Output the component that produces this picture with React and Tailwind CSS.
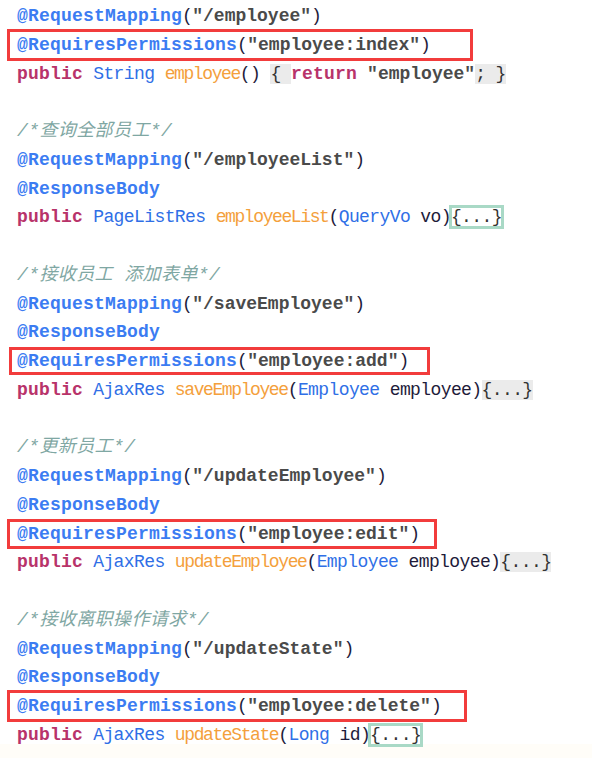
import React from "react";

const A = ({ children }) => (
  <span className="font-bold text-[#3b7cf2] tracking-[0.2px]">{children}</span>
);
const K = ({ children }) => (
  <span className="font-bold text-[#b8336a] tracking-[0.2px]">{children}</span>
);
const T = ({ children }) => (
  <span className="text-[#2f6fe6] tracking-[-0.6px]">{children}</span>
);
const M = ({ children }) => (
  <span className="text-[#f4a03c] tracking-[-1.4px]">{children}</span>
);
const S = ({ children }) => (
  <span className="font-bold text-[#4a4a4a] tracking-[0px]">{children}</span>
);
const P = ({ children }) => (
  <span className="text-[#1e1b3a] tracking-[-0.6px]">{children}</span>
);
const G = ({ children }) => (
  <span className="bg-[#ebebeb] text-[#333] tracking-[-0.6px]">{children}</span>
);
const B = ({ children }) => (
  <span className="tracking-[-0.6px] text-[#333] outline outline-[3px] outline-[#a9d9c6] -outline-offset-1">
    {children}
  </span>
);
const C = ({ children }) => (
  <span className="italic text-[#7fa7a3] tracking-[0.4px]">{children}</span>
);

const Line = ({ children, box }) => (
  <div className="relative h-[28.76px] leading-[28.76px] whitespace-pre">
    {box && (
      <span
        className={
          "absolute border-[3px] border-[#f23c3c] pointer-events-none " + box
        }
      />
    )}
    {children}
  </div>
);

export default function App() {
  return (
    <div
      className="w-[592px] h-[758px] bg-white overflow-hidden flex flex-col"
      style={{ fontFamily: '"Liberation Mono", "Noto Sans CJK SC", monospace' }}
    >
      <div className="pl-[17px] pt-[2px] text-[18px]">
        <Line>
          <A>@RequestMapping</A>
          <P>(</P>
          <S>"/employee"</S>
          <P>)</P>
        </Line>
        <Line box="-left-[10px] -top-[2px] w-[466px] h-[32px]">
          <A>@RequiresPermissions</A>
          <P>(</P>
          <S>"employee:index"</S>
          <P>)</P>
        </Line>
        <Line>
          <K>public</K>
          <P> </P>
          <T>String</T>
          <P> </P>
          <M>employee</M>
          <P>() </P>
          <G>{"{ "}</G>
          <K>return</K>
          <P> </P>
          <S>"employee"</S>
          <G>; {"}"}</G>
        </Line>
        <Line> </Line>
        <Line>
          <C>/*查询全部员工*/</C>
        </Line>
        <Line>
          <A>@RequestMapping</A>
          <P>(</P>
          <S>"/employeeList"</S>
          <P>)</P>
        </Line>
        <Line>
          <A>@ResponseBody</A>
        </Line>
        <Line>
          <K>public</K>
          <P> </P>
          <T>PageListRes</T>
          <P> </P>
          <M>employeeList</M>
          <P>(</P>
          <T>QueryVo</T>
          <P> vo)</P>
          <B>{"{...}"}</B>
        </Line>
        <Line> </Line>
        <Line>
          <C>/*接收员工 添加表单*/</C>
        </Line>
        <Line>
          <A>@RequestMapping</A>
          <P>(</P>
          <S>"/saveEmployee"</S>
          <P>)</P>
        </Line>
        <Line>
          <A>@ResponseBody</A>
        </Line>
        <Line box="-left-[8px] -top-[0px] w-[421px] h-[28px]">
          <A>@RequiresPermissions</A>
          <P>(</P>
          <S>"employee:add"</S>
          <P>)</P>
        </Line>
        <Line>
          <K>public</K>
          <P> </P>
          <T>AjaxRes</T>
          <P> </P>
          <M>saveEmployee</M>
          <P>(</P>
          <T>Employee</T>
          <P> employee)</P>
          <G>{"{...}"}</G>
        </Line>
        <Line> </Line>
        <Line>
          <C>/*更新员工*/</C>
        </Line>
        <Line>
          <A>@RequestMapping</A>
          <P>(</P>
          <S>"/updateEmployee"</S>
          <P>)</P>
        </Line>
        <Line>
          <A>@ResponseBody</A>
        </Line>
        <Line box="-left-[10px] -top-[1px] w-[430px] h-[30px]">
          <A>@RequiresPermissions</A>
          <P>(</P>
          <S>"employee:edit"</S>
          <P>)</P>
        </Line>
        <Line>
          <K>public</K>
          <P> </P>
          <T>AjaxRes</T>
          <P> </P>
          <M>updateEmployee</M>
          <P>(</P>
          <T>Employee</T>
          <P> employee)</P>
          <G>{"{...}"}</G>
        </Line>
        <Line> </Line>
        <Line>
          <C>/*接收离职操作请求*/</C>
        </Line>
        <Line>
          <A>@RequestMapping</A>
          <P>(</P>
          <S>"/updateState"</S>
          <P>)</P>
        </Line>
        <Line>
          <A>@ResponseBody</A>
        </Line>
        <Line box="-left-[10px] -top-[2px] w-[460px] h-[32px]">
          <A>@RequiresPermissions</A>
          <P>(</P>
          <S>"employee:delete"</S>
          <P>)</P>
        </Line>
        <Line>
          <K>public</K>
          <P> </P>
          <T>AjaxRes</T>
          <P> </P>
          <M>updateState</M>
          <P>(</P>
          <T>Long</T>
          <P> id)</P>
          <B>{"{...}"}</B>
        </Line>
      </div>
      <div className="flex-1 bg-[#fffdf8] mt-[-6px]" />
    </div>
  );
}
